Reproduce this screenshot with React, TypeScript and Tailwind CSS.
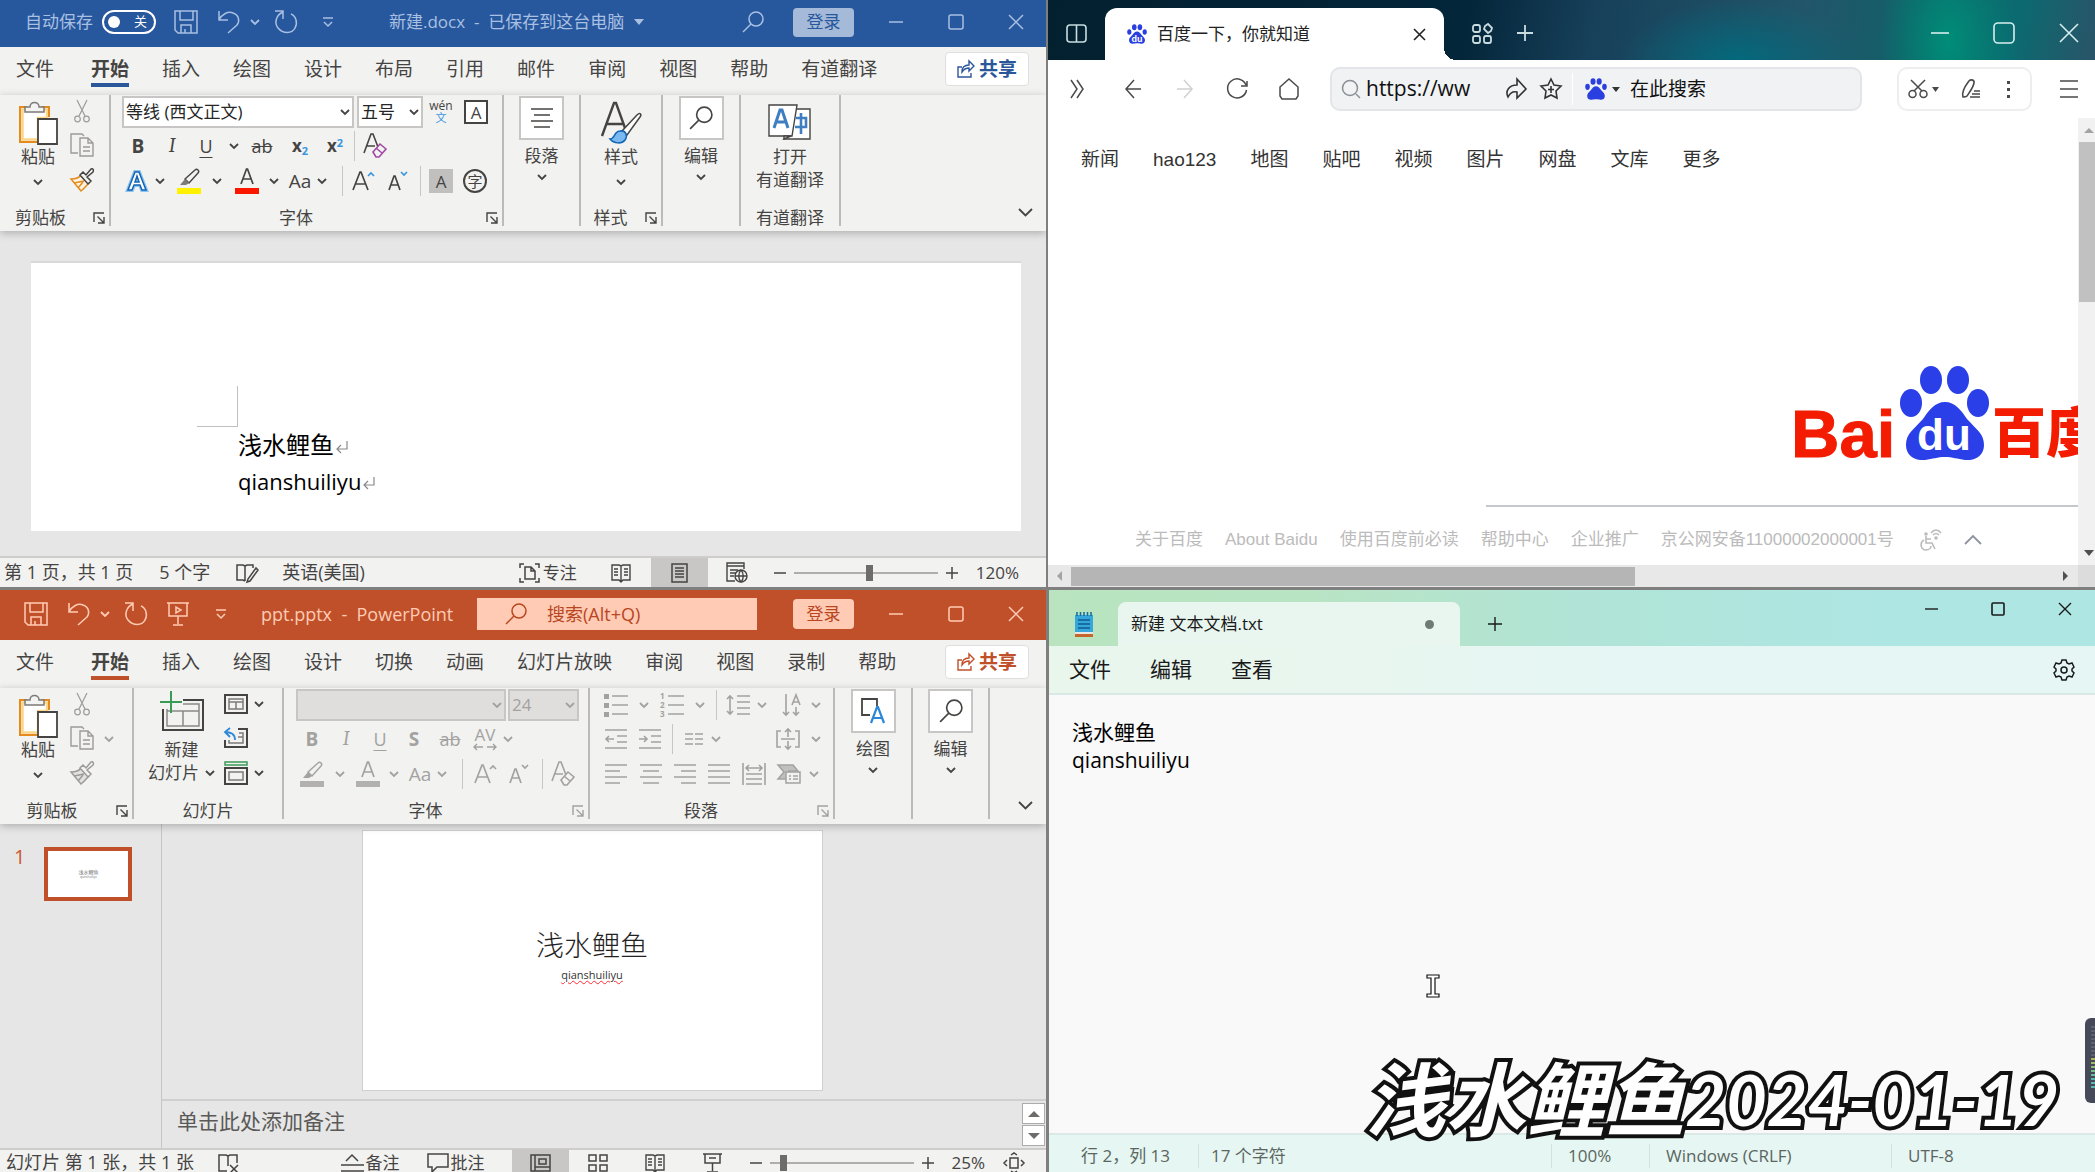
import type { ReactNode } from "react"

type SvgProps = {
  w: number
  h: number
  sw?: number
  className?: string
  children: ReactNode
}

function Svg({ w, h, sw = 1.5, className = "", children }: SvgProps) {
  return (
    <svg
      width={w}
      height={h}
      viewBox={`0 0 ${w} ${h}`}
      fill="none"
      stroke="currentColor"
      strokeWidth={sw}
      className={`shrink-0 overflow-visible ${className}`}
      aria-hidden="true"
    >
      {children}
    </svg>
  )
}

/* ---------- shared icons ---------- */

const Chev = ({ className = "" }: { className?: string }) => (
  <Svg w={10} h={6} sw={1.8} className={className}>
    <path d="M1 1l4 4 4-4" />
  </Svg>
)

const SaveIcon = () => (
  <Svg w={24} h={24}>
    <path d="M1 1h22v22H4l-3-3zM6 1v9h13V1M7 23v-8h10v8M11 19v4" />
  </Svg>
)

const UndoIcon = () => (
  <Svg w={22} h={24}>
    <path d="M1 1v9h9M1 10C4 4 10 1 15 3c6 2 7 8 4 12l-9 8" />
  </Svg>
)

const RedoIcon = () => (
  <Svg w={24} h={24}>
    <path d="M1 1h8v8M9 2C2 5 0 13 4 18c5 6 14 6 17 0 3-5 1-12-4-14" />
  </Svg>
)

const MoreIcon = () => (
  <Svg w={12} h={10}>
    <path d="M1 1h10M2 5l4 4 4-4" />
  </Svg>
)

const SearchIcon = ({ s = 22 }: { s?: number }) => (
  <svg
    width={s}
    height={s}
    viewBox="0 0 22 22"
    fill="none"
    stroke="currentColor"
    strokeWidth="1.5"
    className="shrink-0"
    aria-hidden="true"
  >
    <circle cx="14" cy="8" r="7" />
    <path d="M9 13l-8 8" />
  </svg>
)

const ShareIcon = () => (
  <Svg w={18} h={18} sw={1.4}>
    <path d="M5 7H1v10h13v-4M5 12c0-5 3-7 7-7V1l5 5-5 5V8c-3 0-5 1-7 4z" />
  </Svg>
)

const PasteIcon = () => (
  <Svg w={40} h={44}>
    <path d="M9 6H2v35h18" stroke="#e58a1f" strokeWidth="2" />
    <path d="M9 8.500H4.500v30H20V17h9V8.500z" fill="#fff" stroke="#fbd68a" strokeWidth="2.500" />
    <path d="M23 6h8v10" stroke="#e58a1f" strokeWidth="2" />
    <path d="M7 11V6h5c0-6 9-6 9 0h5v5z" fill="#f3f3f2" stroke="#7c7b79" />
    <path d="M20 18h19v25H20z" fill="#fff" stroke="#454442" strokeWidth="1.800" />
  </Svg>
)

const CutIcon = () => (
  <Svg w={16} h={24} sw={1.2} className="text-[#9c9b99]">
    <path d="M3 1l8 16M13 1L5 17" />
    <circle cx="3.500" cy="20" r="2.800" />
    <circle cx="12.500" cy="20" r="2.800" />
  </Svg>
)

const CopyIcon = () => (
  <Svg w={24} h={24} sw={1.4} className="text-[#9c9b99]">
    <path d="M8 20H1V1h11l2 2M10 5h8l5 5v13H10zM18 5v5h5M13 14h7M13 18h7" />
  </Svg>
)

const BrushIcon = ({ muted = false }: { muted?: boolean }) => (
  <Svg w={24} h={24}>
    <path
      d="M1 11c5 0 8-1 10-4l8 8c-2 2-4 5-8 8L1 11zM4 15l10-2M8 20l5-6"
      stroke={muted ? "#9c9b99" : "#e58a1f"}
      fill={muted ? "#e3e2e1" : "#fff3df"}
    />
    <path
      d="M10 7l3-3 3 3 5-6c2-1 3 1 2 3l-6 5 4 4-3 3z"
      stroke={muted ? "#9c9b99" : "#454442"}
      fill="#f3f3f2"
    />
  </Svg>
)

const LaunchIcon = () => (
  <Svg w={12} h={12} sw={1.4}>
    <path d="M1 10V1h10M4.500 4.500L11 11M11 5v6H5" />
  </Svg>
)

const EraserA = ({ color }: { color: string }) => (
  <Svg w={24} h={26} sw={1.6}>
    <path d="M1 20L8 1h2l5 13M4 13h8" />
    <path d="M10 19l7-8 6 5-7 8h-3zM13 15l6 5" stroke={color} fill="#f3f3f2" />
  </Svg>
)

const PenMark = ({ bar, tip = "#7c7b79" }: { bar: string; tip?: string }) => (
  <Svg w={24} h={26} sw={1.4}>
    <path d="M8 11L18 2c2-2 5 1 3 3l-9 10z" />
    <path d="M3 17l5-6 4 4-3 2z" fill={tip} stroke="none" />
    <path d="M0 20h24v6H0z" fill={bar} stroke="none" />
  </Svg>
)

const FontColor = ({ bar }: { bar: string }) => (
  <Svg w={24} h={26} sw={1.7}>
    <path d="M6 16L11.500 1h1L18 16M8 11h8" />
    <path d="M0 20h24v6H0z" fill={bar} stroke="none" />
  </Svg>
)

const GrowA = ({ up, mark }: { up: boolean; mark: string }) =>
  up ? (
    <Svg w={24} h={24} sw={1.7}>
      <path d="M1 21L8 3h1l7 18M4 15h9" />
      <path d="M16 7l3-3 3 3" stroke={mark} />
    </Svg>
  ) : (
    <Svg w={24} h={24} sw={1.7}>
      <path d="M4 21l5-14h1l5 14M6 16h7" />
      <path d="M16 3l3 3 3-3" stroke={mark} />
    </Svg>
  )

const BookIcon = () => (
  <Svg w={20} h={20} sw={1.4}>
    <path d="M1 2h7l2 1 2-1h7v15h-7l-2 2-2-2H1zM10 3v15M3 6h4M3 9h4M3 12h4M13 6h4M13 9h4M13 12h4" />
  </Svg>
)

const ReturnMark = () => (
  <Svg w={14} h={14} sw={1.2} className="ml-px inline-block text-[#8a8a8a]">
    <path d="M12 0v8H2M6 4L2 8l4 4" />
  </Svg>
)

const Paw = ({ s, text = false }: { s: number; text?: boolean }) => (
  <svg width={s} height={s} viewBox="0 0 20 20" fill="#2a3fe0" className="shrink-0" aria-hidden="true">
    <ellipse cx="7.300" cy="3.200" rx="2.300" ry="3" />
    <ellipse cx="12.900" cy="3.200" rx="2.300" ry="3" />
    <ellipse cx="2.300" cy="8" rx="2.100" ry="2.800" />
    <ellipse cx="17.700" cy="8" rx="2.100" ry="2.800" />
    <path d="M10 7.500c2 0 3.200 1.600 4.400 3.200 2 2.300 3.600 3.300 3.600 5.600 0 2.500-2 3.700-4 3.500-1.600-.2-2.400-.5-4-.5s-2.400.3-4 .5c-2 .2-4-1-4-3.500 0-2.300 1.600-3.300 3.600-5.600C6.800 9.100 8 7.500 10 7.500z" />
    {text && (
      <text x="10" y="18" textAnchor="middle" fontSize="9" fontWeight="700" fill="#fff" fontFamily="Liberation Sans, sans-serif">
        du
      </text>
    )}
  </svg>
)

/* ---------- Office building blocks ---------- */

function OfficeControls() {
  return (
    <div className="flex items-center gap-[44px] pl-[34px] pr-[22px]">
      <button aria-label="最小化">
        <Svg w={16} h={16}><path d="M1 8h14" /></Svg>
      </button>
      <button aria-label="最大化">
        <Svg w={16} h={16}><rect x="1" y="1" width="14" height="14" rx="2" /></Svg>
      </button>
      <button aria-label="关闭">
        <Svg w={16} h={16}><path d="M1 1l14 14M15 1L1 15" /></Svg>
      </button>
    </div>
  )
}

function TabRow({ tabs, bar, accent }: { tabs: string[]; bar: string; accent: string }) {
  return (
    <nav className="flex h-12 shrink-0 items-center pb-1 pl-4 pr-[17px] text-[19px] text-[#454442]">
      <button>文件</button>
      <div className="ml-[37px] flex gap-[33px] whitespace-nowrap">
        {tabs.map((t, i) => (
          <button key={t} className={i === 0 ? "relative font-bold" : "relative"}>
            {t}
            {i === 0 && <span className={`absolute inset-x-0 -bottom-1 h-1 ${bar}`} />}
          </button>
        ))}
      </div>
      <button
        className={`ml-auto flex h-[34px] w-[84px] items-center justify-center gap-1 rounded border border-[#e1dfdd] bg-white font-bold ${accent}`}
      >
        <ShareIcon />
        共享
      </button>
    </nav>
  )
}

function Group({
  width,
  label,
  launch,
  muted = false,
  labelClass = "pr-[5px]",
  children,
}: {
  width: string
  label?: string
  launch?: boolean
  muted?: boolean
  labelClass?: string
  children: ReactNode
}) {
  return (
    <div className={`flex h-[131px] shrink-0 flex-col justify-between border-r-2 border-[#bdbbb9] ${width}`}>
      {children}
      <div className="flex h-4 items-center leading-4">
        <span className={`flex-1 text-center ${launch ? labelClass : ""}`}>{label}</span>
        {launch && (
          <button aria-label={`${label}设置`} className={muted ? "mr-1 text-[#a3a2a0]" : "mr-1"}>
            <LaunchIcon />
          </button>
        )}
      </div>
    </div>
  )
}

function Tool({ w, name, children }: { w: string; name: string; children: ReactNode }) {
  return (
    <button aria-label={name} className={`flex h-full shrink-0 items-center justify-center ${w}`}>
      {children}
    </button>
  )
}

const Sep = ({ w }: { w: string }) => (
  <span className={`flex h-[30px] shrink-0 justify-center ${w}`}>
    <span className="w-px bg-[#c8c6c4]" />
  </span>
)

function Combo({ name, value, w, muted = false }: { name: string; value: string; w: string; muted?: boolean }) {
  return (
    <div className={`grid h-8 items-center ${w}`}>
      <select
        aria-label={name}
        className={`col-start-1 row-start-1 h-8 appearance-none border-2 pl-[2px] text-[17px] ${
          muted ? "border-[#c8c6c4] bg-[#dfdedd] text-[#a3a2a0]" : "border-[#c8c6c4] bg-white text-[#262626]"
        }`}
      >
        <option>{value}</option>
      </select>
      <Chev className="pointer-events-none col-start-1 row-start-1 mr-1 justify-self-end" />
    </div>
  )
}

function BoxButton({ label, children }: { label: string; children: ReactNode }) {
  return (
    <button className="mt-px flex flex-col items-center">
      <span className="flex h-11 w-[45px] items-center justify-center border-2 border-[#c8c6c4] bg-white">{children}</span>
      <span className="mt-[6px] leading-5">{label}</span>
      <Chev className="mt-2" />
    </button>
  )
}

function PasteButton() {
  return (
    <button className="flex w-[68px] flex-col items-center pl-2 pt-[6px]">
      <PasteIcon />
      <span className="mt-[2px] leading-5">粘贴</span>
      <Chev className="mt-3" />
    </button>
  )
}

function Collapse() {
  return (
    <button aria-label="折叠功能区" className="mb-[14px] ml-auto mr-[13px] self-end">
      <Svg w={15} h={9} sw={1.8}><path d="M1 1l6.500 6.500L14 1" /></Svg>
    </button>
  )
}

function Zoom({ value, min, max }: { value: number; min: number; max: number }) {
  return (
    <>
      <button aria-label="缩小" className="shrink-0">
        <Svg w={12} h={12}><path d="M0 6h12" /></Svg>
      </button>
      <input
        type="range"
        aria-label="缩放"
        min={min}
        max={max}
        defaultValue={value}
        className="mx-2 h-4 w-[144px] appearance-none bg-[linear-gradient(#b0aeac,#b0aeac)] bg-[length:100%_2px] bg-center bg-no-repeat [&::-webkit-slider-thumb]:h-4 [&::-webkit-slider-thumb]:w-[7px] [&::-webkit-slider-thumb]:appearance-none [&::-webkit-slider-thumb]:bg-[#6e6c6a]"
      />
      <button aria-label="放大" className="shrink-0">
        <Svg w={12} h={12}><path d="M0 6h12M6 0v12" /></Svg>
      </button>
    </>
  )
}

/* ---------- Word ---------- */

function Word() {
  return (
    <section className="flex min-h-0 flex-col overflow-hidden border-r border-[#7f7f7f] bg-[#f2f2f1]">
      <header className="flex h-[47px] shrink-0 items-center bg-[#27579c] pb-[3px] pl-[25px] text-[17px] text-[#a9c0e3]">
        <label htmlFor="autosave">自动保存</label>
        <span className="relative ml-[9px] flex h-6 w-[54px] items-center justify-between rounded-full border-2 border-white px-1 text-white">
          <span className="size-3 rounded-full bg-white" />
          <span className="mr-[3px] text-[13px]">关</span>
          <input id="autosave" type="checkbox" className="absolute inset-0 size-full cursor-pointer opacity-0" />
        </span>
        <button aria-label="保存" className="ml-[18px]"><SaveIcon /></button>
        <button aria-label="撤消" className="ml-5 flex items-center gap-[10px]"><UndoIcon /><Chev /></button>
        <button aria-label="重做" className="ml-[14px]"><RedoIcon /></button>
        <button aria-label="自定义" className="ml-6"><MoreIcon /></button>
        <button className="ml-[55px] flex items-center gap-[10px] whitespace-nowrap">
          <span className="whitespace-pre">新建.docx  -  已保存到这台电脑</span>
          <Svg w={10} h={6} sw={0}><path d="M0 0h10L5 6z" fill="currentColor" /></Svg>
        </button>
        <button aria-label="搜索" className="ml-auto"><SearchIcon /></button>
        <button className="ml-[29px] h-[29px] w-[61px] rounded-sm bg-[#a5b9d8] text-[#27579c]">登录</button>
        <OfficeControls />
      </header>

      <TabRow
        tabs={["开始", "插入", "绘图", "设计", "布局", "引用", "邮件", "审阅", "视图", "帮助", "有道翻译"]}
        bar="bg-[#2b579a]"
        accent="text-[#2b579a]"
      />

      <div className="relative z-10 flex h-[136px] shrink-0 text-[17px] text-[#454442] shadow-[0_2px_8px_rgba(0,0,0,0.25)]">
        <Group width="w-[111px]" label="剪贴板" labelClass="pr-3" launch>
          <div className="flex">
            <PasteButton />
            <div className="grid w-7 grid-rows-[32px_36px_34px] items-center justify-items-center">
              <button aria-label="剪切"><CutIcon /></button>
              <button aria-label="复制"><CopyIcon /></button>
              <button aria-label="格式刷"><BrushIcon /></button>
            </div>
          </div>
        </Group>

        <Group width="w-[393px]" label="字体" launch>
          <div className="pl-[11px] pt-px">
            <div className="flex h-8 items-center">
              <Combo name="字体" value="等线 (西文正文)" w="w-[232px]" />
              <span className="w-[3px]" />
              <Combo name="字号" value="五号" w="w-[66px]" />
              <Tool w="w-9" name="拼音指南">
                <span className="flex flex-col items-center">
                  <span className="text-[12px] leading-3">wén</span>
                  <span className="text-[11px] leading-3 text-[#3a96dd]">文</span>
                </span>
              </Tool>
              <Tool w="w-[34px]" name="字符边框">
                <span className="flex size-6 items-center justify-center border-2 border-[#454442] bg-white leading-none">A</span>
              </Tool>
            </div>
            <div className="flex h-9 items-center">
              <Tool w="w-8" name="加粗"><b className="text-[19px]">B</b></Tool>
              <Tool w="w-9" name="倾斜"><i className="font-serif text-[20px]">I</i></Tool>
              <Tool w="w-8" name="下划线"><u className="text-[18px] underline-offset-4">U</u></Tool>
              <Tool w="w-6" name="下划线选项"><Chev /></Tool>
              <Tool w="w-8" name="删除线"><s className="text-[18px]">ab</s></Tool>
              <Tool w="w-11" name="下标">
                <b className="text-[17px]">x<sub className="text-[11px] text-[#3a96dd]">2</sub></b>
              </Tool>
              <Tool w="w-[26px]" name="上标">
                <b className="text-[17px]">x<sup className="text-[11px] text-[#3a96dd]">2</sup></b>
              </Tool>
              <Sep w="w-3" />
              <Tool w="w-[30px]" name="清除格式"><EraserA color="#a349a4" /></Tool>
            </div>
            <div className="flex h-[34px] items-center">
              <Tool w="w-[30px]" name="文本效果">
                <Svg w={24} h={24}>
                  <path d="M3 21l7-18h4l7 18h-4l-2-5H9l-2 5zM10 13h4l-2-6z" stroke="#8cc4f0" strokeWidth="4" />
                  <path d="M3 21l7-18h4l7 18h-4l-2-5H9l-2 5zM10 13h4l-2-6z" fill="#fff" stroke="#1464b4" />
                </Svg>
              </Tool>
              <Tool w="w-4" name="文本效果选项"><Chev /></Tool>
              <Tool w="w-[41px]" name="突出显示"><PenMark bar="#fff100" /></Tool>
              <Tool w="w-4" name="突出显示选项"><Chev /></Tool>
              <Tool w="w-[43px]" name="字体颜色"><FontColor bar="#fb1600" /></Tool>
              <Tool w="w-3" name="字体颜色选项"><Chev /></Tool>
              <Tool w="w-[56px]" name="更改大小写">
                <span className="flex items-center gap-[6px] text-[19px]">Aa<Chev /></span>
              </Tool>
              <Sep w="w-3" />
              <Tool w="w-8" name="增大字号"><GrowA up mark="#3a96dd" /></Tool>
              <Tool w="w-[34px]" name="减小字号"><GrowA up={false} mark="#3a96dd" /></Tool>
              <Sep w="w-3" />
              <Tool w="w-[30px]" name="字符底纹">
                <span className="flex size-6 items-center justify-center bg-[#c1c0be] leading-none">A</span>
              </Tool>
              <Tool w="w-[38px]" name="带圈字符">
                <span className="flex size-6 items-center justify-center rounded-full border-2 border-[#454442] text-[15px] leading-none">字</span>
              </Tool>
            </div>
          </div>
        </Group>

        <Group width="w-[77px]">
          <BoxButton label="段落">
            <Svg w={22} h={20}><path d="M0 1h22M3 7h16M0 13h22M3 19h16" /></Svg>
          </BoxButton>
        </Group>

        <Group width="w-[82px]" label="样式" launch>
          <button className="flex flex-col items-center pt-[6px]">
            <Svg w={42} h={44} sw={2.4}>
              <path d="M2 35L14 2h2l9 25M7 23h16" />
              <path d="M22 30L37 14c3-3 5-1 3 2L27 34z" fill="#fff" strokeWidth="1.500" />
              <path d="M10 38c5 0 4-8 10-8 6-1 8 5 5 9-3 4-11 4-15-1z" fill="#79b8f0" stroke="#1464b4" strokeWidth="1.500" />
            </Svg>
            <span className="mt-[2px] leading-5">样式</span>
            <Chev className="mt-3" />
          </button>
        </Group>

        <Group width="w-[78px]">
          <BoxButton label="编辑"><SearchIcon s={24} /></BoxButton>
        </Group>

        <Group width="w-[100px]" label="有道翻译">
          <button className="flex flex-col items-center pt-[6px]">
            <Svg w={44} h={44} sw={1.4}>
              <path d="M26 8h16v30H16l5-5" fill="#fff" />
              <path d="M28 17h10v9H27M33 12v21" stroke="#3f7fc1" strokeWidth="2.600" />
              <path d="M1 4h28l-5 31H1z" fill="#fff" />
              <path d="M16 38v-3h7z" fill="#fff" />
              <path d="M6 27l6-18h2l6 18M8 21h10" stroke="#3f7fc1" strokeWidth="3" />
            </Svg>
            <span className="mt-[2px] leading-5">打开</span>
            <span className="mt-[3px] leading-5">有道翻译</span>
          </button>
        </Group>
        <Collapse />
      </div>

      <main className="flex min-h-0 flex-1 flex-col bg-[#e6e6e6]">
        <div className="mb-[25px] ml-[31px] mr-[25px] mt-[30px] flex-1 border-t-2 border-[#d9d9d9] bg-white pl-[166px] pt-[123px]">
          <div className="h-[41px] w-[41px] border-b border-r border-[#c0c0c0]" />
          <div className="pl-[41px] text-black">
            <p className="h-9 text-[24px] leading-9">
              浅水鲤鱼<ReturnMark />
            </p>
            <p className="h-9 text-[22px] leading-9">
              qianshuiliyu<ReturnMark />
            </p>
          </div>
        </div>
      </main>

      <footer className="flex h-[31px] shrink-0 items-center whitespace-nowrap border-t-2 border-[#cfcdcb] pl-1 pr-[27px] text-[17px] text-[#454442]">
        <span className="text-[18px]">第 1 页，共 1 页</span>
        <span className="ml-[26px] text-[18px]">5 个字</span>
        <button aria-label="校对" className="ml-[26px]">
          <Svg w={22} h={20}><path d="M9 3L7 2H1v15h6l2 1M9 3v15M9 3l2-1h6v3M20 5l-8 11-1 3 3-1 8-11z" /></Svg>
        </button>
        <span className="ml-6 text-[18px]">英语(美国)</span>
        <button className="ml-auto flex items-center gap-[3px]">
          <Svg w={21} h={20}><path d="M5 1H1v4M16 1h4v4M5 19H1v-4M16 19h4v-4M6 4h6l4 4v8H6zM12 4v4h4" /></Svg>
          专注
        </button>
        <button aria-label="阅读视图" className="ml-[34px]"><BookIcon /></button>
        <button aria-label="页面视图" className="ml-5 flex h-[29px] w-[57px] items-center justify-center bg-[#c8c7c5]">
          <Svg w={17} h={20}><path d="M1 1h15v18H1zM4 5h9M4 8h9M4 11h9M4 14h9" /></Svg>
        </button>
        <button aria-label="Web 版式" className="ml-[18px] mr-[26px]">
          <Svg w={22} h={21} sw={1.4}>
            <path d="M9 19H1V1h17v6M1 4h17M4 8h8M4 11h6M4 14h4" />
            <circle cx="15" cy="14" r="6" />
            <path d="M9 14h12M15 8c-3 3-3 9 0 12M15 8c3 3 3 9 0 12" />
          </Svg>
        </button>
        <Zoom value={53} min={0} max={100} />
        <span className="ml-[18px]">120%</span>
      </footer>
    </section>
  )
}

/* ---------- PowerPoint ---------- */

const Lines = ({ d, w = 22 }: { d: string; w?: number }) => (
  <Svg w={w} h={22} sw={1.6}><path d={d} /></Svg>
)

function PowerPoint() {
  return (
    <section className="flex min-h-0 flex-col overflow-hidden border-r border-t-[3px] border-[#7f7f7f] bg-[#f2f2f1]">
      <header className="flex h-[50px] shrink-0 items-center bg-[#c05029] pb-[2px] pl-6 text-[17px] text-[#ffcbb4]">
        <button aria-label="保存"><SaveIcon /></button>
        <button aria-label="撤消" className="ml-5 flex items-center gap-[10px]"><UndoIcon /><Chev /></button>
        <button aria-label="重做" className="ml-[14px]"><RedoIcon /></button>
        <button aria-label="从头开始放映" className="ml-[19px]">
          <Svg w={22} h={24}><path d="M0 1h22M2 1v13h18V1M11 14v8M6 23h10M9 5v6l5-3z" /></Svg>
        </button>
        <button aria-label="自定义" className="ml-[26px]"><MoreIcon /></button>
        <span className="ml-[34px] w-48 whitespace-pre text-[18px]">ppt.pptx  -  PowerPoint</span>
        <label className="ml-6 flex h-8 w-[280px] items-center bg-[#ffcbb4] pl-7 text-[#b8461f]">
          <SearchIcon />
          <input
            aria-label="搜索"
            placeholder="搜索(Alt+Q)"
            className="ml-5 w-40 bg-transparent text-[18px] outline-none placeholder:text-[#b8461f]"
          />
        </label>
        <button className="ml-auto h-[30px] w-[61px] shrink-0 rounded-sm bg-[#ffcbb4] text-[#b8461f]">登录</button>
        <OfficeControls />
      </header>

      <TabRow
        tabs={["开始", "插入", "绘图", "设计", "切换", "动画", "幻灯片放映", "审阅", "视图", "录制", "帮助"]}
        bar="bg-[#c05029]"
        accent="text-[#c05029]"
      />

      <div className="relative z-10 flex h-[136px] shrink-0 text-[17px] text-[#454442] shadow-[0_2px_8px_rgba(0,0,0,0.25)]">
        <Group width="w-[134px]" label="剪贴板" labelClass="pr-3" launch>
          <div className="flex">
            <PasteButton />
            <div className="grid w-7 grid-rows-[32px_36px_34px] items-center justify-items-center">
              <button aria-label="剪切"><CutIcon /></button>
              <button aria-label="复制"><CopyIcon /></button>
              <button aria-label="格式刷"><BrushIcon muted /></button>
            </div>
            <button aria-label="复制选项" className="ml-2 text-[#a3a2a0]"><Chev /></button>
          </div>
        </Group>

        <Group width="w-[150px]" label="幻灯片">
          <div className="flex pl-[14px]">
            <button className="flex flex-col items-center pt-[3px]">
              <Svg w={46} h={44}>
                <path d="M24 9h20v30H4V18" stroke="#454442" strokeWidth="2" />
                <path d="M24 13h16v22H8V18M24 20h16M8 20h32M24 20v15" stroke="#8a8987" fill="none" />
                <path d="M12 0v22M1 11h22" stroke="#3a9b57" strokeWidth="2" />
              </Svg>
              <span className="mt-[5px] leading-5">新建</span>
              <span className="mt-[3px] flex items-center gap-[6px] leading-5">幻灯片<Chev /></span>
            </button>
            <div className="ml-[9px] grid grid-cols-[24px_10px] grid-rows-[32px_36px_34px] items-center gap-x-[6px]">
              <button aria-label="版式">
                <Svg w={24} h={20}><path d="M1 1h22v18H1z" strokeWidth="2" /><path d="M5 5h14v10H5zM5 8h14M12 8v7" stroke="#7c7b79" /></Svg>
              </button>
              <Chev />
              <button aria-label="重置">
                <Svg w={24} h={22}>
                  <path d="M14 2h9v18H1v-7" strokeWidth="2" />
                  <path d="M15 6h4v10H5v-3M14 10h5" stroke="#7c7b79" />
                  <path d="M6 1L1 5l5 5M1 5c6 0 10 2 10 8" stroke="#2b88d8" strokeWidth="1.800" />
                </Svg>
              </button>
              <span />
              <button aria-label="节">
                <Svg w={24} h={24}>
                  <path d="M1 1h22v3H1z" stroke="#3a9b57" />
                  <path d="M1 7h22v16H1z" strokeWidth="2" />
                  <path d="M5 11h14v8H5z" stroke="#7c7b79" />
                </Svg>
              </button>
              <Chev />
            </div>
          </div>
        </Group>

        <Group width="w-[306px]" label="字体" launch muted>
          <div className="pl-3 pt-px text-[#a3a2a0]">
            <div className="flex h-8 items-center gap-[2px]">
              <Combo name="字体" value="" w="w-[210px]" muted />
              <Combo name="字号" value="24" w="w-[71px]" muted />
            </div>
            <div className="flex h-9 items-center">
              <Tool w="w-8" name="加粗"><b className="text-[19px]">B</b></Tool>
              <Tool w="w-9" name="倾斜"><i className="font-serif text-[20px]">I</i></Tool>
              <Tool w="w-8" name="下划线"><u className="text-[18px] underline-offset-4">U</u></Tool>
              <Tool w="w-9" name="阴影"><b className="text-[19px]">S</b></Tool>
              <Tool w="w-9" name="删除线"><s className="text-[18px]">ab</s></Tool>
              <Tool w="w-[34px]" name="字符间距">
                <span className="flex flex-col items-center">
                  <span className="text-[17px] leading-4">AV</span>
                  <Svg w={24} h={8} sw={1.4}><path d="M4 1L1 4l3 3M1 4h9M20 1l3 3-3 3M23 4h-9" /></Svg>
                </span>
              </Tool>
              <Tool w="w-3" name="字符间距选项"><Chev /></Tool>
            </div>
            <div className="flex h-[34px] items-center">
              <Tool w="w-8" name="突出显示"><PenMark bar="#b3b1af" tip="#a3a2a0" /></Tool>
              <Tool w="w-6" name="突出显示选项"><Chev /></Tool>
              <Tool w="w-8" name="字体颜色"><FontColor bar="#b3b1af" /></Tool>
              <Tool w="w-5" name="字体颜色选项"><Chev /></Tool>
              <Tool w="w-12" name="更改大小写">
                <span className="flex items-center gap-[6px] text-[19px]">Aa<Chev /></span>
              </Tool>
              <Sep w="w-5" />
              <Tool w="w-7" name="增大字号"><GrowA up mark="#a3a2a0" /></Tool>
              <Tool w="w-9" name="减小字号"><GrowA up={false} mark="#a3a2a0" /></Tool>
              <Sep w="w-3" />
              <Tool w="w-[30px]" name="清除格式"><EraserA color="#a3a2a0" /></Tool>
            </div>
          </div>
        </Group>

        <Group width="w-[245px]" label="段落" launch muted>
          <div className="pl-2 pt-px text-[#a3a2a0]">
            <div className="flex h-8 items-center">
              <Tool w="w-9" name="项目符号">
                <Svg w={24} h={24} sw={1.6}>
                  <path d="M8 3h16M8 12h16M8 21h16" />
                  <path d="M0 1h5v5H0zM0 10h5v5H0zM0 19h5v5H0z" fill="currentColor" stroke="none" />
                </Svg>
              </Tool>
              <Tool w="w-5" name="项目符号选项"><Chev /></Tool>
              <Tool w="w-9" name="编号">
                <Svg w={24} h={24} sw={1.6}>
                  <path d="M8 3h16M8 12h16M8 21h16" />
                  <g fill="currentColor" stroke="none" fontSize="8" fontWeight="700">
                    <text x="0" y="6">1</text>
                    <text x="0" y="15">2</text>
                    <text x="0" y="24">3</text>
                  </g>
                </Svg>
              </Tool>
              <Tool w="w-5" name="编号选项"><Chev /></Tool>
              <Sep w="w-3" />
              <Tool w="w-8" name="行距"><Lines w={24} d="M4 2v18M1 5l3-3 3 3M1 17l3 3 3-3M11 2h13M11 8h13M11 14h13M11 20h13" /></Tool>
              <Tool w="w-4" name="行距选项"><Chev /></Tool>
              <span className="w-2" />
              <Tool w="w-7" name="文字方向"><Lines w={20} d="M4 0v21M1 18l3 3 3-3M14 13v8M11 18l3 3 3-3M10 11l4-10 4 10M11 8h6" /></Tool>
              <Tool w="w-5" name="文字方向选项"><Chev /></Tool>
            </div>
            <div className="flex h-9 items-center">
              <Tool w="w-9" name="减少缩进"><Lines d="M0 2h22M12 8h10M12 14h10M0 20h22M9 11H1M4 8l-3 3 3 3" /></Tool>
              <Tool w="w-8" name="增加缩进"><Lines d="M0 2h22M12 8h10M12 14h10M0 20h22M0 11h8M5 8l3 3-3 3" /></Tool>
              <Sep w="w-3" />
              <Tool w="w-8" name="分栏"><Lines w={18} d="M0 6h8M0 11h8M0 16h8M10 6h8M10 11h8M10 16h8" /></Tool>
              <Tool w="w-3" name="分栏选项"><Chev /></Tool>
              <span className="w-12" />
              <Tool w="w-9" name="对齐文本"><Lines w={24} d="M5 3H1v16h4M19 3h4v16h-4M12 1v8M9 4l3-3 3 3M12 21v-8M9 18l3 3 3-3M5 11h14" /></Tool>
              <Tool w="w-5" name="对齐文本选项"><Chev /></Tool>
            </div>
            <div className="flex h-[34px] items-center">
              <Tool w="w-9" name="左对齐"><Lines d="M0 2h22M0 8h15M0 14h22M0 20h15" /></Tool>
              <Tool w="w-[34px]" name="居中"><Lines d="M0 2h22M3 8h16M0 14h22M3 20h16" /></Tool>
              <Tool w="w-[34px]" name="右对齐"><Lines d="M0 2h22M7 8h15M0 14h22M7 20h15" /></Tool>
              <Tool w="w-[34px]" name="两端对齐"><Lines d="M0 2h22M0 8h22M0 14h22M0 20h22" /></Tool>
              <Tool w="w-9" name="分散对齐"><Lines w={24} d="M1 0v22M23 0v22M4 11h16M4 16h16M4 21h16M4 5h16M7 2L4 5l3 3M17 2l3 3-3 3" /></Tool>
              <Tool w="w-[34px]" name="转换为 SmartArt">
                <Svg w={24} h={20}>
                  <path d="M1 1h15l5 6h-9v8H1l6-7z" fill="#c1c0be" />
                  <path d="M9 8h14v11H9zM12 12h2M16 12h5M12 15h2M16 15h5" fill="#f2f2f1" />
                </Svg>
              </Tool>
              <Tool w="w-4" name="SmartArt 选项"><Chev /></Tool>
            </div>
          </div>
        </Group>

        <Group width="w-[78px]">
          <BoxButton label="绘图">
            <Svg w={24} h={26} sw={1.8}>
              <path d="M9 17H1V1h15v7" />
              <path d="M10 25l6-16h1l6 16M12 20h9" stroke="#2b88d8" strokeWidth="2.200" />
            </Svg>
          </BoxButton>
        </Group>
        <Group width="w-[77px]">
          <BoxButton label="编辑"><SearchIcon s={24} /></BoxButton>
        </Group>
        <Collapse />
      </div>

      <div className="flex min-h-0 flex-1 bg-[#e6e6e6]">
        <aside className="flex w-[162px] shrink-0 gap-[19px] border-r border-[#c6c6c6] pl-[14px] pt-[23px]">
          <span className="text-[20px] leading-5 text-[#d0562d]">1</span>
          <button
            aria-label="幻灯片 1"
            className="flex h-[54px] w-[88px] flex-col items-center justify-center border-4 border-[#c05029] bg-white text-[#777]"
          >
            <span className="text-[5px] leading-[6px]">浅水鲤鱼</span>
            <span className="text-[3px] leading-[5px]">qianshuiliyu</span>
          </button>
        </aside>
        <div className="flex min-w-0 flex-1 flex-col">
          <div className="flex min-h-0 flex-1 justify-center pb-2 pr-6 pt-[6px]">
            <div className="flex w-[461px] flex-col items-center border border-[#cfcfcf] bg-white pt-[94px]">
              <h1 className="text-[28px] font-light leading-10 text-[#222]">浅水鲤鱼</h1>
              <p className="text-[11px] leading-5 text-[#333] underline decoration-red-500 decoration-wavy decoration-1">
                qianshuiliyu
              </p>
            </div>
          </div>
          <div className="flex h-[49px] items-center border-t-2 border-[#cfcfcf] pl-[15px]">
            <input
              aria-label="备注"
              placeholder="单击此处添加备注"
              className="min-w-0 flex-1 bg-transparent pb-[6px] text-[21px] outline-none placeholder:text-[#5a5957]"
            />
            <div className="mr-px flex w-[23px] flex-col gap-px text-[#6e6c6a]">
              <button aria-label="上一张" className="flex h-[21px] items-center justify-center border border-[#ababab] bg-white">
                <Svg w={12} h={6} sw={0}><path d="M0 6h12L6 0z" fill="currentColor" /></Svg>
              </button>
              <button aria-label="下一张" className="flex h-[21px] items-center justify-center border border-[#ababab] bg-white">
                <Svg w={12} h={6} sw={0}><path d="M0 0h12L6 6z" fill="currentColor" /></Svg>
              </button>
            </div>
          </div>
        </div>
      </div>

      <footer className="flex h-6 shrink-0 items-center whitespace-nowrap border-t-2 border-[#cfcdcb] pl-[6px] pr-[21px] pt-[3px] text-[17px] text-[#454442]">
        <span className="text-[18px]">幻灯片 第 1 张，共 1 张</span>
        <button aria-label="校对" className="ml-6">
          <Svg w={22} h={20}><path d="M10 3L8 2H1v16h8M10 3v10M10 3l2-1h7v8M12 12l8 8M20 12l-8 8" /></Svg>
        </button>
        <button className="ml-auto flex items-center gap-[2px]">
          <Svg w={23} h={20}><path d="M0 12h23M0 18h23M5 8l6-6 6 6" /></Svg>
          备注
        </button>
        <button className="ml-[27px] flex items-center gap-[2px]">
          <Svg w={22} h={20}><path d="M1 1h20v13H10l-5 5v-5H1z" /></Svg>
          批注
        </button>
        <button aria-label="普通视图" className="ml-[27px] flex h-7 w-[57px] items-center justify-center bg-[#c8c7c5]">
          <Svg w={21} h={18}><path d="M1 1h19v16H1zM5 1v16M5 13h15M9 5h7v5H9z" /></Svg>
        </button>
        <button aria-label="幻灯片浏览" className="ml-[19px]">
          <Svg w={20} h={18}><path d="M1 1h7v6H1zM12 1h7v6h-7zM1 11h7v6H1zM12 11h7v6h-7z" /></Svg>
        </button>
        <button aria-label="阅读视图" className="ml-[37px]"><BookIcon /></button>
        <button aria-label="幻灯片放映" className="ml-[38px] mr-7">
          <Svg w={19} h={20}><path d="M0 1h19M2 1v9h15V1M6 5h7M9.500 10v8M4 19h11" /></Svg>
        </button>
        <Zoom value={8} min={0} max={100} />
        <span className="ml-[18px]">25%</span>
        <button aria-label="适应窗口" className="ml-[18px]">
          <Svg w={22} h={22}><path d="M7 6h8v10H7zM8 3l3-2 3 2M8 19l3 2 3-2M4 8l-3 3 3 3M18 8l3 3-3 3" /></Svg>
        </button>
      </footer>
    </section>
  )
}

/* ---------- Browser ---------- */

const navLinks = ["新闻", "hao123", "地图", "贴吧", "视频", "图片", "网盘", "文库", "更多"]
const footLinks = ["关于百度", "About Baidu", "使用百度前必读", "帮助中心", "企业推广", "京公网安备11000002000001号"]

const tri = (d: string) => (
  <Svg w={10} h={10} sw={0}><path d={d} fill="currentColor" /></Svg>
)

function Browser() {
  return (
    <section className="flex min-h-0 min-w-0 flex-col overflow-hidden border-l border-[#7f7f7f] bg-white">
      <header className="flex h-[60px] shrink-0 items-center bg-[radial-gradient(ellipse_70px_120px_at_86%_70%,#008d78,transparent),radial-gradient(ellipse_120px_60px_at_66%_100%,#04697c,transparent),linear-gradient(100deg,#03202f_0%,#04263a_40%,#17405a_52%,#22566a_72%,#0f6068_84%,#0b6a70_92%,#2a5468_100%)] pr-4 text-[#c9dce0]">
        <button aria-label="侧边栏" className="flex w-[57px] justify-center pt-[6px]">
          <Svg w={21} h={19} sw={1.6}><rect x="1" y="1" width="19" height="17" rx="3" /><path d="M10.500 1v17" /></Svg>
        </button>
        <div className="flex h-[52px] w-[339px] shrink-0 items-center self-end rounded-t-[12px] bg-white pl-[22px] pr-[18px] text-[17px] text-[#222]">
          <Paw s={20} text />
          <span className="ml-[10px] flex-1 whitespace-nowrap">百度一下，你就知道</span>
          <button aria-label="关闭标签页">
            <Svg w={13} h={13} sw={1.6}><path d="M1 1l11 11M12 1L1 12" /></Svg>
          </button>
        </div>
        <span className="size-3 self-end bg-[radial-gradient(circle_at_100%_0,transparent_12px,#fff_12px)]" />
        <div className="flex items-center gap-6 pl-4 pt-[6px]">
          <button aria-label="标签管理">
            <Svg w={21} h={21} sw={1.8}>
              <rect x="1" y="2" width="7" height="7" rx="2" />
              <rect x="1" y="13" width="7" height="7" rx="2" />
              <rect x="12" y="13" width="7" height="7" rx="2" />
              <path d="M16 1l4 4-1 3-3 2-4-4 1-3z" />
            </Svg>
          </button>
          <button aria-label="新建标签页">
            <Svg w={16} h={16} sw={1.8}><path d="M0 8h16M8 0v16" /></Svg>
          </button>
        </div>
        <div className="ml-auto flex items-center gap-11 pt-[6px] text-[#d7eeee]">
          <button aria-label="最小化"><Svg w={18} h={18} sw={1.6}><path d="M0 9h18" /></Svg></button>
          <button aria-label="最大化"><Svg w={22} h={22} sw={1.6}><rect x="1" y="1" width="20" height="20" rx="4" /></Svg></button>
          <button aria-label="关闭"><Svg w={20} h={20} sw={1.6}><path d="M1 1l18 18M19 1L1 19" /></Svg></button>
        </div>
      </header>

      <div className="flex h-[58px] shrink-0 items-center pl-[18px] pr-[17px] text-[#4a4a4a]">
        <div className="flex gap-[30px]">
          <button aria-label="更多"><Svg w={26} h={22}><path d="M5 2l6 9-6 9M11 2l6 9-6 9" /></Svg></button>
          <button aria-label="后退"><Svg w={22} h={22}><path d="M12 2l-8 9 8 9M4 11h15" /></Svg></button>
          <button aria-label="前进" className="text-[#d0d0d0]"><Svg w={22} h={22}><path d="M10 2l8 9-8 9M18 11H3" /></Svg></button>
          <button aria-label="刷新"><Svg w={22} h={22}><path d="M20 7A9.500 9.500 0 1 0 20.500 12M15 8h6V3" /></Svg></button>
          <button aria-label="主页"><Svg w={22} h={22}><path d="M2 9l9-8 9 8v9l-2 3H4l-2-3z" /></Svg></button>
        </div>
        <div className="ml-[30px] flex h-11 min-w-0 flex-1 items-center rounded-[10px] border-2 border-[#e3e5e8] bg-[#f0f2f4] pl-[9px] text-[#333]">
          <Svg w={20} h={20} className="text-[#8a8f95]"><circle cx="9" cy="9" r="7.500" /><path d="M15 15l4 4" /></Svg>
          <input aria-label="地址" defaultValue="https://ww" className="ml-[5px] w-[139px] shrink-0 bg-transparent text-[21px] text-[#111] outline-none" />
          <button aria-label="分享">
            <Svg w={22} h={22} sw={1.6}><path d="M12 1l9 10-9 9v-6c-4-1-7 1-9 5-3-6 1-12 9-12z" /></Svg>
          </button>
          <button aria-label="收藏" className="ml-[13px]">
            <Svg w={22} h={22} sw={1.6}><path d="M11 1l3 6 7 1-5 5 1 7-6-3-6 3 1-7-5-5 7-1zM11 8v7M8 11.500h6" /></Svg>
          </button>
          <span className="ml-[10px] h-8 w-px bg-white" />
          <button aria-label="搜索引擎" className="ml-3 flex items-center gap-[5px]">
            <Paw s={22} />
            <Svg w={8} h={5} sw={0}><path d="M0 0h8L4 5z" fill="currentColor" /></Svg>
          </button>
          <input aria-label="搜索" placeholder="在此搜索" className="ml-[10px] min-w-0 flex-1 bg-transparent text-[19px] outline-none placeholder:text-[#111]" />
        </div>
        <div className="ml-[35px] flex h-11 w-[135px] shrink-0 items-center rounded-[10px] border-2 border-[#eceeef] pl-[9px]">
          <button aria-label="截图" className="flex items-center gap-1">
            <Svg w={20} h={20}>
              <circle cx="4.500" cy="15" r="3.500" />
              <circle cx="15.500" cy="15" r="3.500" />
              <path d="M3 1l11 11M17 1L6 12" />
            </Svg>
            <Svg w={7} h={5} sw={0}><path d="M0 0h7L3.500 5z" fill="currentColor" /></Svg>
          </button>
          <button aria-label="笔记" className="ml-[22px]">
            <Svg w={20} h={20} sw={1.6}><path d="M2 18c-2-6 3-12 6-16 2-2 6-1 5 2-1 5-5 10-7 13-1 1-3 1-4 1zM13 12h6M11 15h8M9 18h10" /></Svg>
          </button>
          <button aria-label="菜单" className="ml-[25px]">
            <Svg w={6} h={18} sw={0}><path d="M1 1h3v3H1zM1 8h3v3H1zM1 15h3v3H1z" fill="currentColor" /></Svg>
          </button>
        </div>
        <button aria-label="主菜单" className="ml-7"><Svg w={18} h={18}><path d="M0 1h18M0 9h18M0 17h18" /></Svg></button>
      </div>

      <div className="flex min-h-0 flex-1">
        <main className="min-w-0 flex-1 overflow-hidden">
          <nav className="flex gap-[34px] pl-[33px] pt-8 text-[19px] leading-5 text-[#333]">
            {navLinks.map((t) => (
              <a key={t} href="#" className="font-['Liberation_Sans','Noto_Sans_CJK_SC',sans-serif]">{t}</a>
            ))}
          </nav>
          <div className="mt-[196px] flex h-[94px] overflow-hidden pl-[747px]">
            <svg width="310" height="94" viewBox="0 0 310 94" className="shrink-0 overflow-visible" role="img" aria-label="百度">
              <g fill="#f31c00" fontWeight="900">
                <text x="-4" y="91" fontSize="67" fontFamily="Liberation Sans, sans-serif" stroke="#f31c00">Bai</text>
                <text x="197" y="87" fontSize="54" fontFamily="Noto Sans CJK SC, sans-serif">百度</text>
              </g>
              <g fill="#2a3fe8">
                <ellipse cx="136" cy="14" rx="11" ry="14" />
                <ellipse cx="163" cy="14" rx="11" ry="14" />
                <ellipse cx="116" cy="37" rx="11" ry="14" />
                <ellipse cx="183" cy="37" rx="11" ry="14" />
                <path d="M150 36c10 0 16 8 22 17 10 11 17 15 17 26s-9 16-19 15c-8-1-12-3-20-3s-12 2-20 3c-10 1-19-4-19-15s7-15 17-26c6-9 12-17 22-17z" />
              </g>
              <text x="149" y="84" textAnchor="middle" fontSize="44" fontWeight="700" fill="#fff" fontFamily="Liberation Sans, sans-serif">du</text>
            </svg>
          </div>
          <div className="ml-[438px] mt-[45px] h-[2px] bg-[#c4c7ce]" />
          <div className="mt-[22px] flex items-center gap-[22px] whitespace-nowrap pl-[87px] text-[17px] leading-5 text-[#bbb]">
            {footLinks.map((t) => (
              <a key={t} href="#" className="font-['Liberation_Sans','Noto_Sans_CJK_SC',sans-serif]">{t}</a>
            ))}
            <a href="#" aria-label="无障碍" className="ml-1">
              <Svg w={22} h={22} sw={1.6}>
                <path d="M6 7v7h6l3 6M6 10h5M4 11c-5 3-3 10 2 10 3 0 5-2 5-4M11 4c3-4 7-4 10 0M13 6c2-2 4-2 6 0" />
                <circle cx="6" cy="5" r="1" fill="currentColor" />
                <circle cx="16" cy="9" r="1" fill="currentColor" />
              </Svg>
            </a>
            <button aria-label="展开" className="text-[#8d93a0]"><Svg w={18} h={12} sw={1.8}><path d="M1 10l8-8 8 8" /></Svg></button>
          </div>
        </main>
        <div className="flex w-[17px] shrink-0 flex-col bg-[#f1f1f1]">
          <span className="flex h-6 items-center pl-[6px] text-[#a3a3a3]">{tri("M0 8h10L5 3z")}</span>
          <span className="ml-px h-[160px] bg-[#c1c1c1]" />
          <span className="mt-auto flex h-6 items-center pl-[6px] text-[#505050]">{tri("M0 2h10L5 8z")}</span>
        </div>
      </div>
      <div className="flex h-[22px] shrink-0 items-center bg-[#e8e8e8]">
        <span className="w-[23px] pl-[7px] text-[#a3a3a3]">{tri("M7 0v10L2 5z")}</span>
        <span className="h-[19px] w-[564px] bg-[#b5b5b5]" />
        <span className="ml-auto mr-2 text-[#505050]">{tri("M3 0v10l5-5z")}</span>
        <span className="h-full w-[17px] bg-[#dcdcdc]" />
      </div>
    </section>
  )
}

/* ---------- Notepad ---------- */

const meter = [
  "bg-[#5d6270]", "bg-[#5d6270]", "bg-[#5d6270]", "bg-[#5d6270]", "bg-[#5d6270]", "bg-[#5d6270]",
  "bg-[#5d6270]", "bg-[#5d6270]", "bg-[#b0b45c]", "bg-[#9db866]", "bg-[#8abb74]", "bg-[#74bb8c]",
  "bg-[#66b99c]", "bg-[#58b7ac]", "bg-[#58b7ac]", "bg-[#58b7ac]",
]

function Notepad() {
  return (
    <section className="relative flex min-h-0 min-w-0 flex-col overflow-hidden border-l-2 border-t-[3px] border-[#7f7f7f] bg-[#f9f9f9]">
      <header className="flex h-14 shrink-0 items-center bg-[linear-gradient(90deg,#b9e4bf_0%,#b9e4c4_25%,#b1e4d6_50%,#aee6e4_80%)] pl-[25px] pr-[23px] text-[#1a1a1a]">
        <Svg w={20} h={25} sw={1.6} className="mt-3">
          <path d="M1 3h18v19H1z" fill="#35a7dc" stroke="none" />
          <path d="M1 22h18v3H1z" fill="#c4662c" stroke="none" />
          <path d="M1 20h18v2H1z" fill="#e8e8e8" stroke="none" />
          <path d="M3 0v4M6.500 0v4M10 0v4M13.500 0v4M17 0v4" stroke="#1b6f9c" />
          <path d="M4 8h12M4 12h12M4 16h12" stroke="#0f5d8a" />
        </Svg>
        <div className="ml-6 flex h-11 w-[342px] shrink-0 items-center self-end rounded-t-lg bg-[#e9f6ef] pl-[13px] pr-[26px] text-[17px]">
          <span className="flex-1">新建 文本文档.txt</span>
          <span className="size-[9px] rounded-full bg-[#6f7a75]" />
        </div>
        <button aria-label="新建标签页" className="ml-7 mt-3"><Svg w={14} h={14} sw={1.4}><path d="M0 7h14M7 0v14" /></Svg></button>
        <div className="ml-auto flex gap-[53px] self-start pt-3">
          <button aria-label="最小化"><Svg w={13} h={14} sw={1.4}><path d="M0 7h13" /></Svg></button>
          <button aria-label="最大化"><Svg w={14} h={14} sw={1.6}><rect x="1" y="1" width="12" height="12" rx="1" /></Svg></button>
          <button aria-label="关闭"><Svg w={14} h={14} sw={1.4}><path d="M1 1l12 12M13 1L1 13" /></Svg></button>
        </div>
      </header>
      <nav className="flex h-[49px] shrink-0 items-center gap-[39px] border-b-2 border-[#dbe9e6] bg-[linear-gradient(90deg,#e9f6ec_0%,#e9f6ef_28%,#e5f6f4_55%)] pl-5 pr-5 text-[21px] text-[#1a1a1a]">
        <button>文件</button>
        <button>编辑</button>
        <button>查看</button>
        <button aria-label="设置" className="ml-auto">
          <Svg w={22} h={22}>
            <path d="M9 1h4l1 3 2 1 3-1 2 4-2 2v2l2 2-2 4-3-1-2 1-1 3H9l-1-3-2-1-3 1-2-4 2-2v-2L1 8l2-4 3 1 2-1z" />
            <circle cx="11" cy="11" r="3" />
          </Svg>
        </button>
      </nav>
      <textarea
        aria-label="文本编辑器"
        defaultValue={"浅水鲤鱼\nqianshuiliyu"}
        className="min-h-0 flex-1 resize-none bg-transparent pl-[23px] pt-[23px] text-[21px] leading-7 text-black outline-none"
      />
      <footer className="flex h-[39px] shrink-0 items-center whitespace-nowrap border-t-2 border-[#dbe9e6] bg-[#e6f6f2] pt-1 text-[17px] leading-6 text-[#5b6663]">
        <span className="w-[149px] pl-8">行 2，列 13</span>
        <span className="flex-1 border-l border-[#d2e2de] pl-3">17 个字符</span>
        <span className="w-[98px] border-l border-[#d2e2de] pl-4">100%</span>
        <span className="w-[242px] border-l border-[#d2e2de] pl-4">Windows (CRLF)</span>
        <span className="w-[204px] border-l border-[#d2e2de] pl-4">UTF-8</span>
      </footer>

      {/* mouse pointer */}
      <div className="pointer-events-none absolute left-[36%] top-[66%]">
        <Svg w={14} h={24} sw={1.2}><path d="M1 1h12v3H9v16h4v3H1v-3h4V4H1z" fill="#fff" stroke="#111" /></Svg>
      </div>

      {/* watermark and level meter sit over the editor */}
      <p className="pointer-events-none absolute bottom-7 right-[36px] flex items-center whitespace-nowrap font-bold italic leading-[90px] text-white [-webkit-text-stroke:8px_#111] [paint-order:stroke_fill]">
        <span className="text-[80px]">浅水鲤鱼</span>
        <span className="font-['Lato',sans-serif] text-[70px]">2024-01-19</span>
      </p>
      <div className="absolute bottom-[69px] right-0 flex h-[85px] w-[10px] flex-col gap-[2px] rounded-l-md bg-[#464a58] pl-[6px] pt-2">
        {meter.map((c, i) => (
          <span key={i} className={`h-[2px] ${c}`} />
        ))}
      </div>
    </section>
  )
}

export default function App() {
  return (
    <div className="grid h-screen grid-cols-[1047fr_1048fr] grid-rows-[587fr_585fr] overflow-hidden bg-[#7f7f7f] font-['Open_Sans','Noto_Sans_CJK_SC',sans-serif]">
      <Word />
      <Browser />
      <PowerPoint />
      <Notepad />
    </div>
  )
}
